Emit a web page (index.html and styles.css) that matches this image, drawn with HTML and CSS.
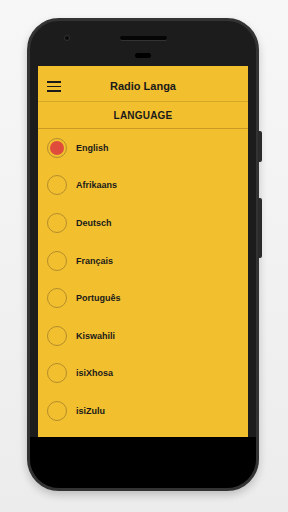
FILE: index.html
```html
<!DOCTYPE html>
<html lang="en">
<head>
    <meta charset="UTF-8">
    <meta name="viewport" content="width=device-width, initial-scale=1.0">
    <title>Radio Langa</title>
    <link rel="stylesheet" href="styles.css">
</head>
<body>
<div class="phone">
    <div class="side-btn btn-top"></div>
    <div class="side-btn btn-bottom"></div>
    <div class="phone-inner">
        <div class="bezel-top">
            <span class="camera"></span>
            <span class="speaker"></span>
            <span class="sensor"></span>
        </div>
        <div class="screen">
            <div class="toolbar">
                <div class="menu-icon">
                    <span></span><span></span><span></span>
                </div>
                <h1>Radio Langa</h1>
            </div>
            <div class="section-title">LANGUAGE</div>
            <ul class="lang-list">
                <li><span class="radio checked"></span>English</li>
                <li><span class="radio"></span>Afrikaans</li>
                <li><span class="radio"></span>Deutsch</li>
                <li><span class="radio"></span>Français</li>
                <li><span class="radio"></span>Português</li>
                <li><span class="radio"></span>Kiswahili</li>
                <li><span class="radio"></span>isiXhosa</li>
                <li><span class="radio"></span>isiZulu</li>
            </ul>
        </div>
        <div class="chin"></div>
    </div>
</div>
</body>
</html>
```

FILE: styles.css
```css
body {
    font-family: "Liberation Sans", Arial, sans-serif;
    margin: 0;
    padding: 0;
    width: 288px;
    height: 512px;
    overflow: hidden;
    background: linear-gradient(#f7f7f7, #ececec);
}
.phone {
    position: relative;
    margin: 18px 0 0 27px;
    width: 232px;
    height: 473px;
}
.phone-inner {
    box-sizing: border-box;
    height: 100%;
    border: 3px solid #333;
    border-radius: 32px;
    overflow: hidden;
    background: #1c1c1c;
    display: flex;
    flex-direction: column;
    box-shadow: 0 4px 8px rgba(0, 0, 0, 0.2);
}
.side-btn {
    position: absolute;
    right: -3px;
    width: 4px;
    background: #2a2a2a;
    border-radius: 0 2px 2px 0;
}
.btn-top {
    top: 113px;
    height: 31px;
}
.btn-bottom {
    top: 180px;
    height: 60px;
}
.bezel-top {
    position: relative;
    height: 45px;
    display: flex;
    flex-direction: column;
    align-items: center;
}
.speaker {
    margin-top: 15px;
    width: 47px;
    height: 4px;
    border-radius: 2px;
    background: #050505;
    box-shadow: 0 1px 0 #333;
}
.sensor {
    margin-top: 13px;
    width: 16px;
    height: 5px;
    border-radius: 3px;
    background: #000;
}
.camera {
    position: absolute;
    left: 34px;
    top: 14px;
    width: 4px;
    height: 4px;
    border-radius: 50%;
    background: #0a0a0a;
    border: 1px solid #333;
}
.screen {
    margin: 0 8px;
    height: 371px;
    background: #f2bf2f;
    color: #1a1a1a;
}
.toolbar {
    position: relative;
    height: 35px;
    border-bottom: 1px solid #d6a82a;
    display: flex;
    align-items: center;
    justify-content: center;
}
.toolbar h1 {
    margin: 4px 0 0;
    font-size: 11px;
    font-weight: bold;
}
.menu-icon {
    position: absolute;
    left: 9px;
    top: 15px;
    width: 14px;
    display: flex;
    flex-direction: column;
    gap: 3px;
}
.menu-icon span {
    height: 1.6px;
    background: #1a1a1a;
}
.section-title {
    height: 26px;
    border-bottom: 1px solid #c99a24;
    display: flex;
    align-items: center;
    justify-content: center;
    font-size: 10px;
    font-weight: bold;
    letter-spacing: 0.2px;
}
.lang-list {
    list-style: none;
    margin: 0;
    padding: 0;
}
.lang-list li {
    height: 37.6px;
    display: flex;
    align-items: center;
    padding-left: 9px;
    gap: 9px;
    font-size: 9px;
    font-weight: bold;
}
.radio {
    box-sizing: border-box;
    width: 20px;
    height: 20px;
    border: 1px solid #b48d2c;
    border-radius: 50%;
    display: flex;
    align-items: center;
    justify-content: center;
}
.radio.checked::after {
    content: "";
    width: 14px;
    height: 14px;
    border-radius: 50%;
    background: #df4c3c;
}
.chin {
    flex: 1;
    background: #000;
}
```
